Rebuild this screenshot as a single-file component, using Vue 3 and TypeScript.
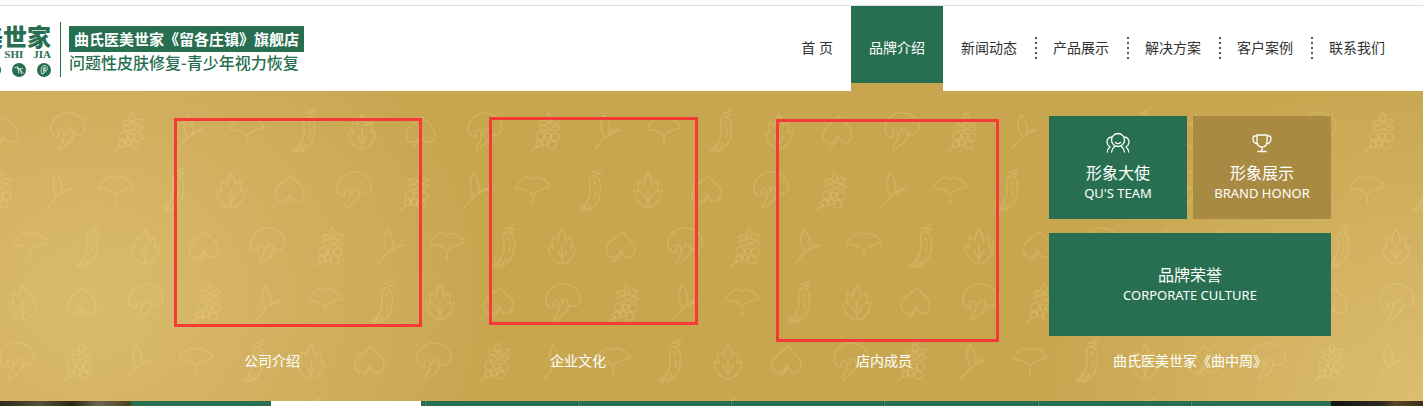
<script setup lang="ts">
interface NavItem {
  label: string
  active?: boolean
  divided?: boolean
}

interface Motif {
  name: string
  x: number
}

const navItems: NavItem[] = [
  { label: '首 页' },
  { label: '品牌介绍', active: true },
  { label: '新闻动态', divided: true },
  { label: '产品展示', divided: true },
  { label: '解决方案', divided: true },
  { label: '客户案例', divided: true },
  { label: '联系我们' },
]

const columns = [
  { label: '公司介绍', frame: 'frame-company' },
  { label: '企业文化', frame: 'frame-culture' },
  { label: '店内成员', frame: 'frame-members' },
]

const tabs = [1, 2, 3, 4, 5, 6]

// The herb wallpaper repeats every 417px; each row is the same sequence, shifted.
const period = 417
const sequence: Motif[] = [
  { name: 'heart', x: 3 },
  { name: 'mushroom', x: 68 },
  { name: 'berries', x: 129 },
  { name: 'sprig', x: 190 },
  { name: 'ginkgo', x: 247 },
  { name: 'root', x: 306 },
  { name: 'leaf', x: 362 },
]
const rows = [
  { y: 41, shift: 0 },
  { y: 100, shift: 286 },
  { y: 156, shift: 200 },
  { y: 212, shift: 78 },
  { y: 271, shift: 366 },
  { y: 330, shift: 5 },
]
const motifs = rows.flatMap((row) =>
  sequence.flatMap((m) => {
    const x = (m.x + row.shift) % period
    return [x - period, x, x + period]
      .filter((px) => px > -24 && px < period + 24)
      .map((px) => ({ name: m.name, x: px, y: row.y }))
  }),
)
</script>

<template>
  <div class="page">
    <header class="header">
      <a class="brand" href="#" aria-label="曲氏医美世家">
        <span class="brand-name">美世家</span>
        <span class="brand-latin"><span>SHI</span><span>JIA</span></span>
        <span class="brand-seals">
          <svg class="seal" viewBox="0 0 14 14" aria-hidden="true">
            <circle cx="7" cy="7" r="7" />
            <path d="M4 10c1-5 3-6 6-6M7 4l4 5" />
          </svg>
          <svg class="seal" viewBox="0 0 14 14" aria-hidden="true">
            <circle cx="7" cy="7" r="7" />
            <path d="M2.500 4.500 6 5l5.500 5M5 3l2 3 4-.5M6 5.500l1 5M7.500 6l2.500 5" />
          </svg>
          <svg class="seal" viewBox="0 0 14 14" aria-hidden="true">
            <circle cx="7" cy="7" r="7" />
            <path d="M5 11C3.500 8 4 4 6.500 3S11 4 10 6.500 6 11 5 11M6 6l3-1M6 8l3-1M7 4v6" />
          </svg>
        </span>
      </a>
      <div class="slogan">
        <strong class="slogan-shop">曲氏医美世家《留各庄镇》旗舰店</strong>
        <span class="slogan-text">问题性皮肤修复-青少年视力恢复</span>
      </div>
      <nav class="nav" aria-label="主导航">
        <a
          v-for="item in navItems"
          :key="item.label"
          href="#"
          class="nav-link"
          :class="{ active: item.active, divided: item.divided }"
          >{{ item.label }}</a
        >
      </nav>
    </header>

    <section class="panel">
      <svg class="wallpaper" aria-hidden="true">
        <defs>
          <g id="heart">
            <path d="M2-16C6-9 15-6 15 3c0 6-5 9-9 7C3 9 2 7 1 3 1 8-2 12-7 15M2-16C-3-9-14-6-14 3c0 6 5 9 9 7 3-1 5-4 6-7" />
          </g>
          <g id="mushroom">
            <path d="M-8 4C-13 7-17 2-17-3c0-9 8-16 17-16S17-13 17-5c0 7-7 10-11 7C4 0 5-3 2-4M-8 4c-3-2-2-6 1-6 3 0 3 3 3 5M6 2C5 8 0 12-3 14l-5 4-1-4c3-2 5-6 5-11M-1-4c3 2 0 5-3 7" />
          </g>
          <g id="berries">
            <path d="M-15 19-8 14M3-10C-1-13 0-17 3-19 6-16 7-13 3-10M3-9C6-13 10-13 14-12 12-8 8-6 3-9M3-9C-1-13-4-12-7-11-5-7-1-6 3-9M4-3C8-7 11-6 14-5 12-1 8 0 4-3M3-3C0-7-4-7-7-5-5-1-1 0 3-3" />
            <circle cx="-6" cy="4" r="4" />
            <circle cx="2" cy="4" r="3" />
            <circle cx="9" cy="5" r="4" />
            <circle cx="-7" cy="12" r="3" />
            <circle cx="-1" cy="11" r="3" />
            <circle cx="6" cy="13" r="4" />
          </g>
          <g id="sprig">
            <path d="M-12 17-2 5C3 2 8 0 13-2 9-3 4-1 2 3M-2 5C-8-4-7-11-3-17 3-12 4-6 2 3" />
          </g>
          <g id="ginkgo">
            <path d="M0 13V4C-4-1-9-2-17-3c2-6 8-11 14-11l3 2 4-2c6 1 11 5 13 10C9-2 4-1 0 4" />
          </g>
          <g id="root">
            <path d="M3-15C-3-16-3-10-2-4-1 3-3 9-8 14M3-15c6 2 6 11 5 18C7 9 5 13 0 17M-1-18l11-5M1-19l7 1-5 3M-8 14l-5 4h4M-4 12l-6 8 5-2M0 12l-5 8 5-3M2-11l1 5M4-2 3 6" />
          </g>
          <g id="leaf">
            <path d="M0 17C-9 16-13 7-14 0l5 1C-11-4-10-8-9-10l5 4c0-5 2-9 4-12 2 3 4 7 4 12l5-4c1 2 2 6 0 11l5-1C13 7 9 16 0 17ZM0 17V-3M0 12-5 3M0 12 5 3" />
          </g>
          <pattern id="herbs" width="417" height="310" patternUnits="userSpaceOnUse">
            <use
              v-for="(m, i) in motifs"
              :key="i"
              :href="`#${m.name}`"
              :x="m.x"
              :y="m.y"
              class="motif"
            />
          </pattern>
        </defs>
        <rect width="100%" height="100%" fill="url(#herbs)" />
      </svg>

      <div class="columns">
        <a v-for="col in columns" :key="col.label" class="column" href="#">
          <span class="stage"><span class="frame" :class="col.frame"></span></span>
          <span class="caption">{{ col.label }}</span>
        </a>
        <div class="column">
          <div class="tiles">
            <a class="tile" href="#">
              <svg class="tile-icon" viewBox="0 0 24 22" aria-hidden="true">
                <circle cx="12" cy="8" r="6.500" />
                <path d="M9.500 10.500c1.500 1.300 3.500 1.300 5 0M6 5C2 5 .8 8 1 10.500c.2 2 1.500 3.500 3 4.500M18 5c4 0 5.200 3 5 5.500-.2 2-1.500 3.500-3 4.500M4 15c-1.500 1.200-2.500 3-2.700 5M20 15c1.500 1.200 2.500 3 2.700 5M9 14c-2 1.500-3.200 3.500-3.500 6M15 14c2 1.500 3.200 3.500 3.500 6" />
              </svg>
              <span class="tile-title">形象大使</span>
              <span class="tile-sub">QU'S TEAM</span>
            </a>
            <a class="tile tile-gold" href="#">
              <svg class="tile-icon" viewBox="0 0 24 22" aria-hidden="true">
                <path d="M7 3h10v6c0 4-2 6-5 6s-5-2-5-6ZM7 4H5C3.500 4 3 5 3 6.500 3 9.500 5 11.500 7.500 12M17 4h2c1.500 0 2 1 2 2.500 0 3-2 5-4.500 5.500M12 15v4M8 19.500h8" />
              </svg>
              <span class="tile-title">形象展示</span>
              <span class="tile-sub">BRAND HONOR</span>
            </a>
            <a class="tile tile-wide" href="#">
              <span class="tile-title">品牌荣誉</span>
              <span class="tile-sub">CORPORATE CULTURE</span>
            </a>
          </div>
          <span class="caption">曲氏医美世家《曲中周》</span>
        </div>
      </div>
    </section>

    <div class="strip">
      <span class="strip-photo-left"></span>
      <span class="strip-first"></span>
      <span class="strip-current"></span>
      <span v-for="t in tabs" :key="t" class="strip-tab"></span>
      <span class="strip-photo-right"></span>
    </div>
  </div>
</template>

<style>
body {
  margin: 0;
}
</style>

<style scoped>
.page {
  --green: #286f51;
  --gold: #c8a650;
  overflow: hidden;
  background: #fff;
  font-family: "Noto Sans", "Noto Sans CJK SC", sans-serif;
  font-size: 14px;
  line-height: 20px;
}

a {
  color: inherit;
  text-decoration: none;
}

.header {
  display: flex;
  margin-top: 5px;
  height: 85px;
  border-top: 1px solid #ddd;
  padding-right: 20px;
}

.brand {
  display: flex;
  flex-direction: column;
  align-items: flex-end;
  width: 51px;
  height: 55px;
  margin-top: 16px;
  padding-right: 9px;
  border-right: 1px solid var(--green);
  overflow: hidden;
  color: var(--green);
  flex: none;
}

.brand-name {
  font-family: "Noto Sans CJK SC", sans-serif;
  font-size: 24px;
  font-weight: 900;
  line-height: 28px;
  white-space: nowrap;
}

.brand-latin {
  display: flex;
  gap: 10px;
  font: bold 11px/8px "Liberation Serif", serif;
}

.brand-seals {
  display: flex;
  gap: 11px;
  margin-top: 5px;
}

.seal {
  width: 14px;
  height: 14px;
  flex: none;
  fill: var(--green);
}

.seal path {
  fill: none;
  stroke: #fff;
  stroke-width: 0.8;
}

.slogan {
  margin: 20px 0 0 8px;
  color: var(--green);
  font-family: "Noto Sans CJK SC", sans-serif;
  white-space: nowrap;
}

.slogan-shop {
  display: block;
  padding: 0 5px;
  background: var(--green);
  color: #fff;
  font-size: 15px;
  line-height: 26px;
}

.slogan-text {
  display: block;
  font-size: 16px;
  font-weight: 500;
  line-height: 20px;
}

.nav {
  display: flex;
  margin-left: auto;
  white-space: nowrap;
}

.nav-link {
  position: relative;
  box-sizing: border-box;
  height: 85px;
  padding: 0 18px;
  color: #333;
  line-height: 84px;
}

.nav-link.active {
  border-bottom: 8px solid var(--gold);
  background: var(--green);
  color: #fff;
}

.nav-link.divided::after {
  content: "";
  position: absolute;
  top: 31px;
  right: -2px;
  width: 2px;
  height: 22px;
  background: repeating-linear-gradient(#555 0 2px, transparent 2px 5px);
}

.panel {
  position: relative;
  background:
    radial-gradient(ellipse 400px 340px at 90px 210px, #dabb6e, #d2b060 50%, transparent),
    radial-gradient(ellipse 380px 330px at 100% 100%, #dcbe70, transparent),
    var(--gold);
  color: #fff;
}

.wallpaper {
  position: absolute;
  inset: 0;
  width: 100%;
  height: 100%;
}

.motif {
  fill: none;
  stroke: #ffe6a0;
  stroke-opacity: 0.17;
  stroke-width: 1.6;
  stroke-linejoin: round;
}

.columns {
  position: relative;
  display: grid;
  grid-template-columns: repeat(4, 1fr);
  padding: 25px 80px 30px 119px;
}

.column {
  display: flex;
  flex-direction: column;
  justify-content: space-between;
  gap: 5px;
  text-align: center;
}

.stage {
  display: flex;
  height: 230px;
}

.frame {
  box-sizing: border-box;
  border: 3px solid #f43b35;
}

.frame-company {
  width: 248px;
  height: 209px;
  margin: 2px 0 0 55px;
}

.frame-culture {
  width: 209px;
  height: 208px;
  margin: 1px 0 0 64px;
}

.frame-members {
  width: 223px;
  height: 223px;
  margin: 3px 0 0 45px;
}

.tiles {
  display: grid;
  grid-template-columns: 1fr 1fr;
  gap: 14px 6px;
  padding: 0 12px;
}

.tile {
  box-sizing: border-box;
  display: flex;
  flex-direction: column;
  align-items: center;
  justify-content: center;
  height: 103px;
  padding-bottom: 2px;
  background: var(--green);
}

.tile-gold {
  background: #a88a43;
}

.tile-wide {
  grid-column: 1 / -1;
}

.tile-icon {
  width: 24px;
  height: 22px;
  margin-bottom: 8px;
  fill: none;
  stroke: #fff;
  stroke-width: 1.3;
  stroke-linecap: round;
}

.tile-title {
  font-size: 16px;
  line-height: 22px;
}

.tile-sub {
  font-size: 13px;
  line-height: 18px;
}

.strip {
  display: flex;
  height: 5px;
  background: var(--green);
}

.strip-photo-left {
  width: 131px;
  background: linear-gradient(90deg, #2c2a1c, #55503a 30%, #2a2715 55%, #6b6552 75%, #4b431c);
}

.strip-first {
  width: 140px;
}

.strip-current {
  width: 150px;
  margin-right: 3px;
  background: #fff;
}

.strip-tab {
  flex: 153;
  border-left: 1px solid #1d5a40;
  box-shadow: inset 1px 0 #4c8a6d;
}

.strip-tab:nth-last-child(2) {
  flex: 141;
}

.strip-photo-right {
  width: 92px;
  background: linear-gradient(90deg, #15130f, #2b2920 55%, #5b4526 70%, #3d2e1a);
}
</style>
